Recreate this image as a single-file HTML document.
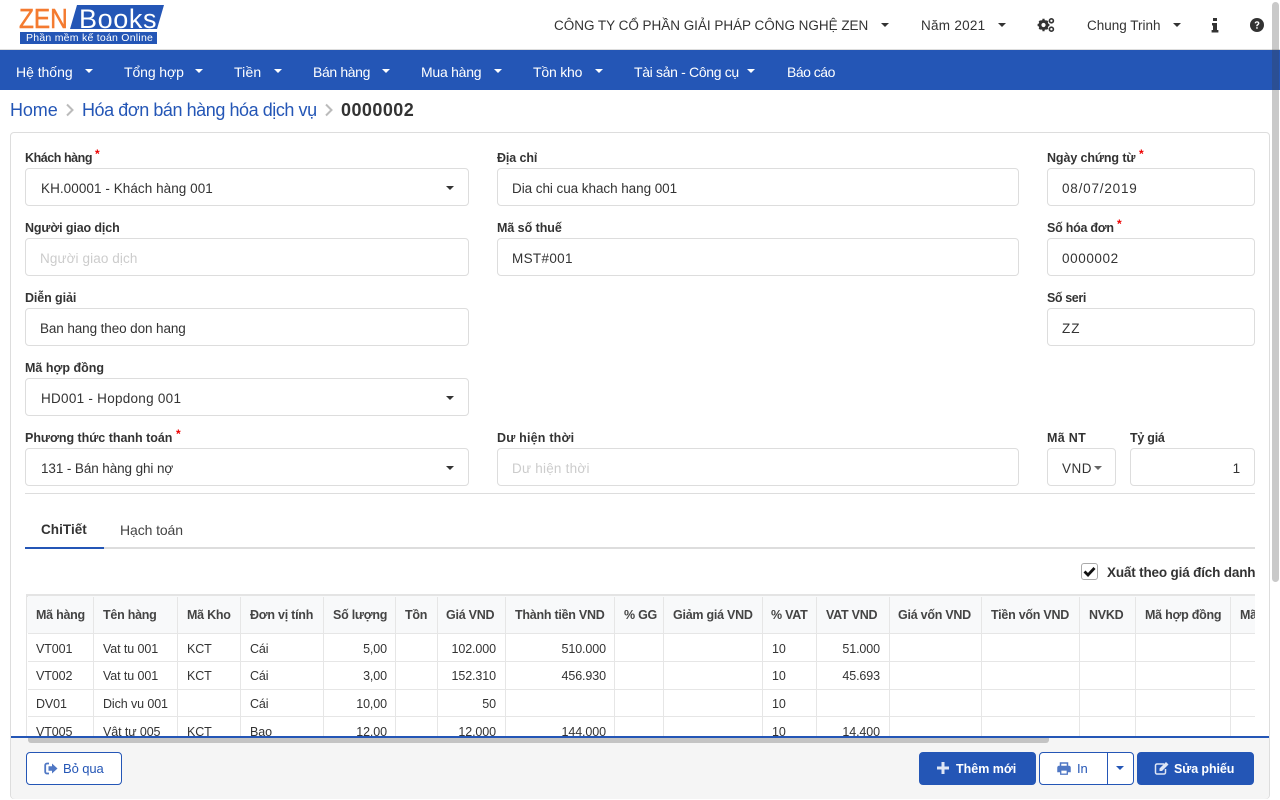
<!DOCTYPE html>
<html lang="vi">
<head>
<meta charset="utf-8">
<title>Hóa đơn bán hàng</title>
<style>
html,body{margin:0;padding:0;width:1280px;height:800px;overflow:hidden;background:#fff}
body{position:relative;font-family:"Liberation Sans","Noto Sans CJK SC",sans-serif;font-size:13.5px;color:#333;letter-spacing:-.1px}
div,span,svg{box-sizing:border-box}
.a{position:absolute;white-space:nowrap}
.top{position:absolute;top:17px;line-height:18px;font-size:13.5px;color:#333;white-space:nowrap}
.car{position:absolute;width:0;height:0;border-left:4px solid transparent;border-right:4px solid transparent;border-top:4px solid #333}
.nav{position:absolute;top:63px;line-height:18px;color:#fff;font-size:14px;white-space:nowrap}
.car.w{border-top-color:#fff}
.lb{position:absolute;line-height:16px;font-size:12.5px;font-weight:bold;color:#333;white-space:nowrap;letter-spacing:-.25px;transform:translateY(1px)}
.req{position:absolute;color:#e00;font-size:12px;line-height:12px;font-weight:bold}
.in{position:absolute;height:38px;border:1px solid #ddd;border-radius:4px;background:#fff;line-height:39px;padding-left:14px;font-size:13.5px;color:#333;white-space:nowrap}
.ph{color:#ccc}
#tb{position:absolute;left:26px;top:594px;width:1229px;height:144px;overflow:hidden;border-top:3px solid #e4e4e4;border-left:2px solid #e4e4e4}
.hd{position:absolute;left:0;top:0;width:1300px;height:37px;background:#f8f9fa}
.hl{position:absolute;left:0;width:1300px;height:1px;background:#e6e6e6}
.vl{position:absolute;top:0;width:1px;height:144px;background:#e6e6e6}
.th{position:absolute;top:10px;line-height:17px;font-size:12.5px;font-weight:bold;color:#444;white-space:nowrap;letter-spacing:-.25px}
.td{position:absolute;line-height:16px;font-size:12.5px;color:#333;white-space:nowrap}
.r{text-align:right}
.btn{position:absolute;top:752px;height:33px;border-radius:4px;font-size:12.5px;line-height:32px;white-space:nowrap;font-weight:bold}
.blue{background:#2456b6;color:#fff;border:1px solid #2456b6}
.ol{background:#fff;color:#2456b6;border:1px solid #2456b6;font-weight:normal;font-size:13px}
</style>
</head>
<body>

<!-- logo -->
<div class="a" style="left:19px;top:3px;line-height:31px;font-size:28px;color:#f47b30;letter-spacing:0;transform:scaleX(.87);transform-origin:left;-webkit-text-stroke:.5px #f47b30">ZEN</div>
<svg class="a" style="left:70px;top:5px" width="95" height="24"><polygon points="7,0 94,0 87,24 0,24" fill="#2456b6"/></svg>
<div class="a" style="left:79px;top:4px;line-height:30px;font-size:27px;color:#fff;letter-spacing:.6px">Books</div>
<div class="a" style="left:20px;top:32px;width:137px;height:12px;background:#2456b6;color:#fff;font-size:10.5px;line-height:12px;padding-left:6px;letter-spacing:.25px">Phần mềm kế toán Online</div>

<!-- top bar -->
<div class="top" style="left:554px;letter-spacing:-.02px">CÔNG TY CỔ PHẦN GIẢI PHÁP CÔNG NGHỆ ZEN</div>
<div class="car" style="left:881px;top:23px"></div>
<div class="top" style="left:921px;letter-spacing:.27px">Năm 2021</div>
<div class="car" style="left:998px;top:23px"></div>
<svg class="a" style="left:1037px;top:17px" width="18" height="16" viewBox="0 0 18 16"><circle cx="6.500" cy="8" r="3.600" fill="none" stroke="#333" stroke-width="3"/><g stroke="#333" stroke-width="2.200"><path d="M6.500 1.800v2M6.500 12.200v2M.6 8h2M10.400 8h2M2.400 3.900l1.400 1.400M9.200 10.700l1.400 1.400M2.400 12.100l1.400-1.400M9.200 5.300l1.400-1.400"/></g><circle cx="14.400" cy="3.800" r="2" fill="none" stroke="#333" stroke-width="1.600"/><circle cx="14.400" cy="12.200" r="2" fill="none" stroke="#333" stroke-width="1.600"/></svg>
<div class="top" style="left:1087px;letter-spacing:0">Chung Trinh</div>
<div class="car" style="left:1173px;top:23px"></div>
<svg class="a" style="left:1211px;top:17px" width="8" height="16" viewBox="0 0 8 16"><path d="M2 1h4v3H2zM1 6h5v7h1.400v2.500H.6V13H2V8.500H1z" fill="#333"/></svg>
<svg class="a" style="left:1250px;top:18px" width="14" height="14" viewBox="0 0 14 14"><circle cx="7" cy="7" r="7" fill="#333"/><path d="M4.600 5.300C4.800 4 5.800 3.300 7 3.300c1.400 0 2.400.8 2.400 2 0 1.800-1.800 1.700-1.800 3H6.200c0-2 1.700-2 1.700-3 0-.5-.4-.8-.9-.8s-.9.300-1 .9z" fill="#fff"/><rect x="6.200" y="9.200" width="1.500" height="1.500" fill="#fff"/></svg>

<!-- nav -->
<div class="a" style="left:0;top:49px;width:1280px;height:1px;background:#ddd"></div>
<div class="a" style="left:0;top:50px;width:1280px;height:40px;background:#2456b6"></div>
<div class="nav" style="left:16px;letter-spacing:-.03px">Hệ thống</div><div class="car w" style="left:85px;top:69px"></div>
<div class="nav" style="left:124px;letter-spacing:-.1px">Tổng hợp</div><div class="car w" style="left:195px;top:69px"></div>
<div class="nav" style="left:234px;letter-spacing:.15px">Tiền</div><div class="car w" style="left:274px;top:69px"></div>
<div class="nav" style="left:313px;letter-spacing:-.37px">Bán hàng</div><div class="car w" style="left:382px;top:69px"></div>
<div class="nav" style="left:421px;letter-spacing:-.25px">Mua hàng</div><div class="car w" style="left:494px;top:69px"></div>
<div class="nav" style="left:533px;letter-spacing:-.2px">Tồn kho</div><div class="car w" style="left:595px;top:69px"></div>
<div class="nav" style="left:634px;letter-spacing:-.33px">Tài sản - Công cụ</div><div class="car w" style="left:747px;top:69px"></div>
<div class="nav" style="left:787px;letter-spacing:-.5px">Báo cáo</div>

<!-- breadcrumb -->
<div class="a" style="left:10px;top:99px;line-height:23px;font-size:18px;color:#2456b6;letter-spacing:-.1px">Home</div>
<svg class="a" style="left:65px;top:103px" width="10" height="14"><path d="M2 1.500 7.500 7 2 12.500" fill="none" stroke="#bbb" stroke-width="2"/></svg>
<div class="a" style="left:82px;top:99px;line-height:23px;font-size:18px;color:#2456b6;letter-spacing:-.44px">Hóa đơn bán hàng hóa dịch vụ</div>
<svg class="a" style="left:324px;top:103px" width="10" height="14"><path d="M2 1.500 7.500 7 2 12.500" fill="none" stroke="#bbb" stroke-width="2"/></svg>
<div class="a" style="left:341px;top:99px;line-height:23px;font-size:18px;font-weight:bold;color:#333;letter-spacing:.45px">0000002</div>

<!-- card -->
<div class="a" style="left:10px;top:132px;width:1260px;height:667px;border:1px solid #ddd;border-radius:4px"></div>

<div class="lb" style="left:25px;top:149px;letter-spacing:-.45px">Khách hàng</div><div class="req" style="left:95px;top:148px">*</div>
<div class="in" style="left:25px;top:168px;width:444px;padding-left:15px;letter-spacing:.06px">KH.00001 - Khách hàng 001</div><div class="car" style="left:446px;top:186px"></div>
<div class="lb" style="left:497px;top:149px;letter-spacing:-.1px">Địa chỉ</div>
<div class="in" style="left:497px;top:168px;width:522px;letter-spacing:-.06px">Dia chi cua khach hang 001</div>
<div class="lb" style="left:1047px;top:149px;letter-spacing:-.1px">Ngày chứng từ</div><div class="req" style="left:1139px;top:148px">*</div>
<div class="in" style="left:1047px;top:168px;width:208px;letter-spacing:.8px">08/07/2019</div>

<div class="lb" style="left:25px;top:219px;letter-spacing:-.12px">Người giao dịch</div>
<div class="in ph" style="left:25px;top:238px;width:444px;letter-spacing:.1px">Người giao dịch</div>
<div class="lb" style="left:497px;top:219px;letter-spacing:-.05px">Mã số thuế</div>
<div class="in" style="left:497px;top:238px;width:522px;letter-spacing:.33px">MST#001</div>
<div class="lb" style="left:1047px;top:219px">Số hóa đơn</div><div class="req" style="left:1117px;top:218px">*</div>
<div class="in" style="left:1047px;top:238px;width:208px;letter-spacing:.6px">0000002</div>

<div class="lb" style="left:25px;top:289px;letter-spacing:-.1px">Diễn giải</div>
<div class="in" style="left:25px;top:308px;width:444px">Ban hang theo don hang</div>
<div class="lb" style="left:1047px;top:289px;letter-spacing:-.4px">Số seri</div>
<div class="in" style="left:1047px;top:308px;width:208px;letter-spacing:1px">ZZ</div>

<div class="lb" style="left:25px;top:359px;letter-spacing:0">Mã hợp đồng</div>
<div class="in" style="left:25px;top:378px;width:444px;padding-left:15px;letter-spacing:.27px">HD001 - Hopdong 001</div><div class="car" style="left:446px;top:396px"></div>

<div class="lb" style="left:25px;top:429px;letter-spacing:-.02px">Phương thức thanh toán</div><div class="req" style="left:176px;top:428px">*</div>
<div class="in" style="left:25px;top:448px;width:444px;padding-left:15px">131 - Bán hàng ghi nợ</div><div class="car" style="left:446px;top:466px"></div>
<div class="lb" style="left:497px;top:429px;letter-spacing:.2px">Dư hiện thời</div>
<div class="in ph" style="left:497px;top:448px;width:522px;letter-spacing:.23px">Dư hiện thời</div>
<div class="lb" style="left:1047px;top:429px;letter-spacing:.3px">Mã NT</div>
<div class="in" style="left:1047px;top:448px;width:69px;letter-spacing:.5px">VND</div><div class="car" style="left:1094px;top:466px;border-top-color:#666"></div>
<div class="lb" style="left:1130px;top:429px">Tỷ giá</div>
<div class="in r" style="left:1130px;top:448px;width:125px;padding:0 14px 0 0">1</div>

<div class="a" style="left:25px;top:493px;width:1230px;height:1px;background:#ddd"></div>

<!-- tabs -->
<div class="a" style="left:41px;top:521px;line-height:18px;font-size:13.5px;font-weight:bold;color:#333;letter-spacing:.05px">ChiTiết</div>
<div class="a" style="left:120px;top:521px;line-height:18px;font-size:14px;color:#444;letter-spacing:-.1px">Hạch toán</div>
<div class="a" style="left:25px;top:547px;width:1230px;height:2px;background:#ddd"></div>
<div class="a" style="left:25px;top:547px;width:79px;height:2px;background:#2456b6"></div>

<!-- checkbox -->
<div class="a" style="left:1081px;top:563px;width:17px;height:17px;border:1px solid #aaa;border-radius:3px;background:#fff"></div>
<svg class="a" style="left:1083px;top:566px" width="13" height="11" viewBox="0 0 13 11"><path d="M1.500 5.500 5 9l6.500-7" fill="none" stroke="#111" stroke-width="2.800"/></svg>
<div class="a" style="left:1107px;top:564px;line-height:18px;font-size:13.5px;font-weight:bold;color:#333;letter-spacing:-.17px">Xuất theo giá đích danh</div>

<!-- table -->
<div id="tb">
<div class="hd"></div>
<div class="hl" style="top:36px"></div>
<div class="hl" style="top:64px"></div>
<div class="hl" style="top:92px"></div>
<div class="hl" style="top:119px"></div>
<div class="vl" style="left:65px"></div>
<div class="vl" style="left:149px"></div>
<div class="vl" style="left:212px"></div>
<div class="vl" style="left:295px"></div>
<div class="vl" style="left:367px"></div>
<div class="vl" style="left:409px"></div>
<div class="vl" style="left:477px"></div>
<div class="vl" style="left:586px"></div>
<div class="vl" style="left:635px"></div>
<div class="vl" style="left:734px"></div>
<div class="vl" style="left:788px"></div>
<div class="vl" style="left:861px"></div>
<div class="vl" style="left:953px"></div>
<div class="vl" style="left:1051px"></div>
<div class="vl" style="left:1107px"></div>
<div class="vl" style="left:1202px"></div>

<div class="th" style="left:8px">Mã hàng</div>
<div class="th" style="left:75px">Tên hàng</div>
<div class="th" style="left:159px">Mã Kho</div>
<div class="th" style="left:222px">Đơn vị tính</div>
<div class="th" style="left:305px">Số lượng</div>
<div class="th" style="left:377px">Tồn</div>
<div class="th" style="left:418px">Giá VND</div>
<div class="th" style="left:487px">Thành tiền VND</div>
<div class="th" style="left:596px">% GG</div>
<div class="th" style="left:645px">Giảm giá VND</div>
<div class="th" style="left:743px">% VAT</div>
<div class="th" style="left:798px">VAT VND</div>
<div class="th" style="left:870px">Giá vốn VND</div>
<div class="th" style="left:963px">Tiền vốn VND</div>
<div class="th" style="left:1061px">NVKD</div>
<div class="th" style="left:1117px">Mã hợp đồng</div>
<div class="th" style="left:1212px">Mã</div>

<div class="td" style="left:8px;top:44px">VT001</div><div class="td" style="left:75px;top:44px">Vat tu 001</div><div class="td" style="left:159px;top:44px">KCT</div><div class="td" style="left:222px;top:44px">Cái</div>
<div class="td r" style="left:296px;width:63px;top:44px">5,00</div><div class="td r" style="left:410px;width:58px;top:44px">102.000</div><div class="td r" style="left:478px;width:100px;top:44px">510.000</div><div class="td" style="left:744px;top:44px">10</div><div class="td r" style="left:789px;width:63px;top:44px">51.000</div>

<div class="td" style="left:8px;top:71px">VT002</div><div class="td" style="left:75px;top:71px">Vat tu 001</div><div class="td" style="left:159px;top:71px">KCT</div><div class="td" style="left:222px;top:71px">Cái</div>
<div class="td r" style="left:296px;width:63px;top:71px">3,00</div><div class="td r" style="left:410px;width:58px;top:71px">152.310</div><div class="td r" style="left:478px;width:100px;top:71px">456.930</div><div class="td" style="left:744px;top:71px">10</div><div class="td r" style="left:789px;width:63px;top:71px">45.693</div>

<div class="td" style="left:8px;top:99px">DV01</div><div class="td" style="left:75px;top:99px">Dich vu 001</div><div class="td" style="left:222px;top:99px">Cái</div>
<div class="td r" style="left:296px;width:63px;top:99px">10,00</div><div class="td r" style="left:410px;width:58px;top:99px">50</div><div class="td" style="left:744px;top:99px">10</div>

<div class="td" style="left:8px;top:127px">VT005</div><div class="td" style="left:75px;top:127px">Vật tư 005</div><div class="td" style="left:159px;top:127px">KCT</div><div class="td" style="left:222px;top:127px">Bao</div>
<div class="td r" style="left:296px;width:63px;top:127px">12,00</div><div class="td r" style="left:410px;width:58px;top:127px">12.000</div><div class="td r" style="left:478px;width:100px;top:127px">144.000</div><div class="td" style="left:744px;top:127px">10</div><div class="td r" style="left:789px;width:63px;top:127px">14.400</div>
</div>
<div class="a" style="left:28px;top:596px;width:1227px;height:1px;background:#f8f9fa"></div>
<div class="a" style="left:27px;top:597px;width:1px;height:36px;background:#f8f9fa"></div>
<div class="a" style="left:27px;top:633px;width:1px;height:103px;background:#fff"></div>

<!-- footer -->
<div class="a" style="left:11px;top:738px;width:1258px;height:61px;background:#f5f5f5;border-radius:0 0 4px 4px"></div>
<div class="a" style="left:11px;top:736px;width:1258px;height:2px;background:#2456b6"></div>
<div class="a" style="left:28px;top:738px;width:1021px;height:5px;background:#c4c4c4;border-radius:0 0 3px 3px"></div>

<div class="btn ol" style="left:26px;width:96px;padding-left:36px">Bỏ qua</div>
<svg class="a" style="left:44px;top:762px;opacity:.8" width="14" height="13" viewBox="0 0 14 13"><path d="M5 1.500H3A1.800 1.800 0 0 0 1.200 3.300v6.400A1.800 1.800 0 0 0 3 11.500h2" fill="none" stroke="#2456b6" stroke-width="1.800"/><path d="M8 1.500 13.500 6.500 8 11.500V8.700H4.500V4.300H8z" fill="#2456b6"/></svg>

<div class="btn blue" style="left:919px;width:117px;padding-left:36px;letter-spacing:0">Thêm mới</div>
<svg class="a" style="left:937px;top:762px" width="12" height="12" viewBox="0 0 12 12"><path d="M4.500 0h3v4.500H12v3H7.500V12h-3V7.500H0v-3h4.500z" fill="#dfe6f5"/></svg>

<div class="btn ol" style="left:1039px;width:95px;padding-left:37px">In</div>
<div class="a" style="left:1107px;top:752px;width:1px;height:33px;background:#2456b6"></div>
<svg class="a" style="left:1057px;top:762px;opacity:.8" width="14" height="13" viewBox="0 0 14 13"><path d="M3.500 4.500V1h7v3.500M3.500 9.500H1V5.500C1 5 1.500 4.500 2 4.500h10c.5 0 1 .5 1 1v4h-2.500" fill="none" stroke="#2456b6" stroke-width="1.500"/><path d="M1 5h12v4H1z" fill="#2456b6"/><rect x="3.700" y="8" width="6.600" height="4.200" fill="#fff" stroke="#2456b6" stroke-width="1.300"/></svg>
<div class="car" style="left:1116px;top:766px;border-top-color:#2456b6"></div>

<div class="btn blue" style="left:1137px;width:117px;padding-left:36px;letter-spacing:-.1px">Sửa phiếu</div>
<svg class="a" style="left:1154px;top:761px" width="16" height="14" viewBox="0 0 16 14"><path d="M10 3H3A1.500 1.500 0 0 0 1.500 4.500v7A1.500 1.500 0 0 0 3 13h7a1.500 1.500 0 0 0 1.500-1.500V8" fill="none" stroke="#dfe6f5" stroke-width="1.500"/><path d="M5.500 7.500 12 1l2.500 2.500L8 10H5.500z" fill="#dfe6f5"/></svg>

<!-- page scrollbar -->
<div class="a" style="left:1272px;top:2px;width:7px;height:580px;background:rgba(60,60,60,.28);border-radius:4px"></div>

</body>
</html>
